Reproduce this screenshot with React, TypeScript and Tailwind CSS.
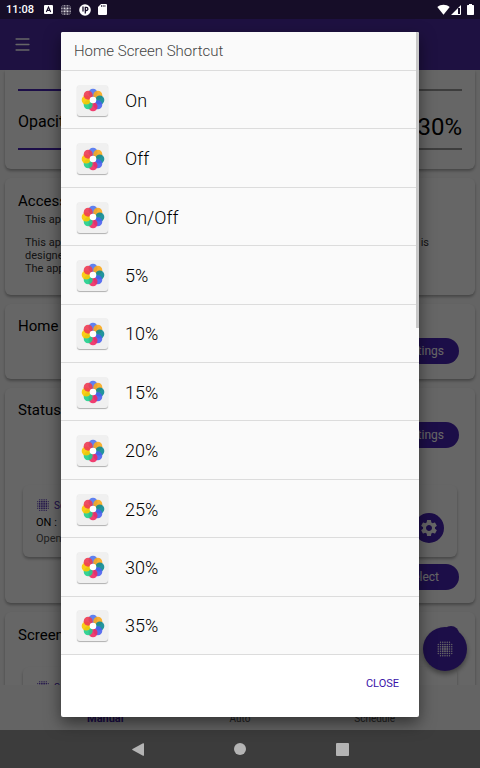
import { Menu } from "lucide-react";
import { MdSettings } from "react-icons/md";

const shortcuts = ["On", "Off", "On/Off", "5%", "10%", "15%", "20%", "25%", "30%", "35%"];

const petals = [
  "#4f74f0",
  "#fba81c",
  "#0b8a94",
  "#4a60f0",
  "#f02a62",
  "#1fcf8c",
  "#fcc800",
  "#ee3b52",
];

function FlowerIcon() {
  return (
    <span className="flex size-[31px] shrink-0 items-center justify-center rounded-[3px] bg-[#f0f0f0] shadow-[0_1px_1px_rgba(0,0,0,0.3)]">
      <svg viewBox="-12 -12 24 24" className="size-6">
        {petals.map((color, i) => {
          const a = (i * Math.PI) / 4;
          return (
            <circle
              key={color}
              cx={6.8 * Math.sin(a)}
              cy={-6.8 * Math.cos(a)}
              r="4.5"
              fill={color}
              fillOpacity="0.9"
            />
          );
        })}
        <circle r="3.3" fill="#fff" />
      </svg>
    </span>
  );
}

// Halftone dots, larger towards the middle
function DotsIcon({ className }: { className: string }) {
  const steps = [-6, -4, -2, 0, 2, 4, 6];
  return (
    <svg viewBox="-8 -8 16 16" fill="currentColor" className={className}>
      {steps.map((x) =>
        steps.map((y) => {
          const d = Math.hypot(x, y);
          return d < 7.5 ? <circle key={`${x},${y}`} cx={x} cy={y} r={0.9 - d * 0.04} /> : null;
        })
      )}
    </svg>
  );
}

function StatusBar() {
  return (
    <div className="relative z-20 flex h-[19px] shrink-0 items-center bg-[#160d28] px-[6px] text-white">
      <span className="text-[11px] font-medium leading-none">11:08</span>
      <div className="ml-[10px] flex items-center gap-[7px]">
        <svg viewBox="0 0 9 9" className="size-[9px]">
          <rect width="9" height="9" rx="1" fill="#fff" />
          <path d="M2.3 7 4.5 2 6.7 7M3.2 5.4h2.6" fill="none" stroke="#160d28" strokeWidth="1.1" />
        </svg>
        <DotsIcon className="size-3" />
        <svg viewBox="0 0 12 12" className="size-3">
          <circle cx="6" cy="6" r="5.8" fill="#fff" />
          <path d="M4 2.5v5" stroke="#160d28" strokeWidth="1.3" />
          <path d="M6.3 9.5V3.3h1a1.6 1.6 0 0 1 0 3.2h-1" fill="none" stroke="#160d28" strokeWidth="1.3" />
        </svg>
        <svg viewBox="0 0 9 11" className="h-[11px] w-[9px]">
          <path d="M3 0h5a1 1 0 0 1 1 1v9a1 1 0 0 1-1 1H1a1 1 0 0 1-1-1V3Z" fill="#fff" />
          <path d="M3.5 1v2M5.2 1v2M6.9 1v2" stroke="#160d28" strokeWidth=".7" />
        </svg>
      </div>
      <div className="ml-auto flex items-center gap-px">
        <svg viewBox="0 0 13 11" className="h-[11px] w-[13px]">
          <path d="M.3 3C4 0 9 0 12.7 3L6.5 10.8Z" fill="#fff" />
        </svg>
        <svg viewBox="0 0 10 10" className="mr-[5px] size-[10px]">
          <path d="M0 10 10 0v3H7v7Z" fill="#fff" />
          <path d="M9.5 1v8.5H1" fill="none" stroke="#fff" />
          <path d="M7.6 4v4.4" stroke="#160d28" />
        </svg>
        <svg viewBox="0 0 7 11" className="h-[11px] w-[7px]">
          <path d="M2 0h3v1h1.3q.7 0 .7.7v8.6q0 .7-.7.7H.7q-.7 0-.7-.7V1.7q0-.7.7-.7H2Z" fill="#fff" />
        </svg>
      </div>
    </div>
  );
}

const card = "rounded-[6px] bg-white shadow-[0_2px_3px_rgba(0,0,0,0.3)]";
const pill = "h-[26px] rounded-full bg-[#4823b4] text-xs text-white";
const heading = "text-[15px] leading-[22px]";
const slider =
  "block h-[2px] w-full appearance-none bg-linear-to-r from-[#4823b4] from-30% to-[#999] to-30%";

function PreviewCard({ label }: { label: string }) {
  return (
    <div className={`${card} mx-[13px] flex h-[72px] items-start px-[13px] pt-3`}>
      <div className="min-w-0 flex-1 text-[#555]">
        <div className="flex h-4 items-center gap-1 text-[10px] text-[#4823b4]">
          <DotsIcon className="size-[14px]" />
          <span>{label}</span>
        </div>
        <p className="mt-[2px] flex gap-2 text-[11px] leading-4 text-black">
          <span>ON :</span>
          <span>30%</span>
        </p>
        <p className="text-[11px] leading-4">Open the app</p>
      </div>
      <button
        aria-label="Notification settings"
        className="mt-4 flex size-[30px] items-center justify-center rounded-full bg-[#4823b4] text-white"
      >
        <MdSettings className="size-5" />
      </button>
    </div>
  );
}

function AppContent() {
  return (
    <main className="flex min-h-0 flex-1 flex-col gap-[9px] overflow-hidden bg-[#fafafa] px-[5px]">
      <section className={`${card} h-[99px] shrink-0 rounded-t-none px-[13px] pt-[19px]`}>
        <input type="range" aria-label="Color" defaultValue={30} className={slider} />
        <div className="flex h-[57px] items-center justify-between">
          <label htmlFor="opacity" className="pt-1 text-base">
            Opacity
          </label>
          <output htmlFor="opacity" className="pt-[15px] text-2xl leading-none">
            30%
          </output>
        </div>
        <input id="opacity" type="range" defaultValue={30} className={slider} />
      </section>

      <section className={`${card} h-[117px] shrink-0 px-[13px] pt-3`}>
        <h2 className={heading}>Accessibility Service</h2>
        <div className="pt-px pr-5 pl-[7px] text-[11px] leading-[13px] text-[#333]">
          <p>This app uses Accessibility services.</p>
          <p className="mt-[10px]">
            This app uses the permissions to draw over the whole screen of the device and it is
            designed to reduce the brightness of the display.
          </p>
          <p>The app does not collect any data.</p>
        </div>
      </section>

      <section className={`${card} h-[75px] shrink-0 px-[13px] pt-[11px]`}>
        <h2 className={heading}>Home Screen Shortcut</h2>
        <div className="flex justify-end pt-px pr-[3px]">
          <button className={`${pill} px-[15px]`}>Settings</button>
        </div>
      </section>

      <section className={`${card} h-[215px] shrink-0 px-[5px] pt-[11px]`}>
        <h2 className={`${heading} px-2`}>Status Bar</h2>
        <div className="flex justify-end pt-px pr-[11px]">
          <button className={`${pill} px-[15px]`}>Settings</button>
        </div>
        <div className="mt-[37px]">
          <PreviewCard label="Screen" />
        </div>
        <div className="mt-[7px] flex justify-end pr-[11px]">
          <button className={`${pill} px-5`}>Select</button>
        </div>
      </section>

      <section className={`${card} h-[215px] shrink-0 px-[5px] pt-3`}>
        <h2 className={`${heading} px-2`}>Screen Filter</h2>
        <div className="mt-[21px]">
          <PreviewCard label="Screen" />
        </div>
      </section>
    </main>
  );
}

function ShortcutDialog() {
  return (
    <div
      role="dialog"
      aria-labelledby="dialog-title"
      className="absolute inset-x-[61px] top-8 bottom-[51px] z-30 flex flex-col overflow-hidden rounded-[2px] bg-white shadow-[0_6px_16px_rgba(0,0,0,0.5)]"
    >
      <h1
        id="dialog-title"
        className="flex h-[39px] shrink-0 items-center border-b border-[#dcdcdc] bg-[#fafafa] px-[13px] pt-px text-[15px] font-light text-[#444]"
      >
        Home Screen Shortcut
      </h1>
      <ul className="flex flex-1 flex-col bg-[#fafafa]">
        {shortcuts.map((name) => (
          <li key={name} className="flex flex-1 border-b border-[#dcdcdc]">
            <button className="flex w-full items-center gap-[17px] px-4 pt-px text-left text-lg font-light text-black">
              <FlowerIcon />
              <span className="pt-px">{name}</span>
            </button>
          </li>
        ))}
      </ul>
      <div className="flex h-[62px] shrink-0 items-center justify-end px-5 pb-1">
        <button className="text-[11px] text-[#3a12a8]">CLOSE</button>
      </div>
      <div className="absolute top-0 right-0 h-[296px] w-[3px] bg-[#c8c8c8]" />
    </div>
  );
}

export default function App() {
  return (
    <div className="relative flex h-screen flex-col overflow-hidden bg-[#fafafa] font-[Roboto,sans-serif] text-black">
      <StatusBar />
      <header className="flex h-[51px] shrink-0 items-center bg-[#4c2ca4] px-[13px] text-white">
        <button aria-label="Menu">
          <Menu className="size-[19px]" strokeWidth={2} />
        </button>
      </header>
      <AppContent />
      <nav className="grid h-[45px] shrink-0 grid-cols-3 items-end bg-[#fafafa] px-[38px] pb-1 text-center text-[10px] leading-[14px] text-[#555]">
        <a href="#manual" className="text-[11px] font-bold text-[#4823b4]">Manual</a>
        <a href="#auto">Auto</a>
        <a href="#schedule">Schedule</a>
      </nav>
      <div className="absolute right-[13px] bottom-[97px]">
        <span className="absolute -top-px right-2 size-4 rounded-full bg-[#4823b4]" />
        <button
          aria-label="Toggle filter"
          className="relative flex size-11 items-center justify-center rounded-full bg-[#4823b4] text-white shadow-[0_3px_5px_rgba(0,0,0,0.4)]"
        >
          <DotsIcon className="size-[18px]" />
        </button>
      </div>

      <div className="absolute inset-0 z-10 bg-black/60" />
      <ShortcutDialog />

      <div className="relative z-20 flex h-[38px] shrink-0 items-center justify-center gap-[90px] bg-[#3c3c3c] text-[#b4b4b4]">
        <button aria-label="Back">
          <svg viewBox="0 0 12 13" fill="currentColor" className="h-[13px] w-3">
            <path d="M11 .3q1-.5 1 .5v11.4q0 1-1 .5L.5 7Q-.2 6.5.5 6Z" />
          </svg>
        </button>
        <button aria-label="Home" className="size-3 rounded-full bg-current" />
        <button aria-label="Recent apps" className="size-[13px] rounded-[1px] bg-current" />
      </div>
    </div>
  );
}
